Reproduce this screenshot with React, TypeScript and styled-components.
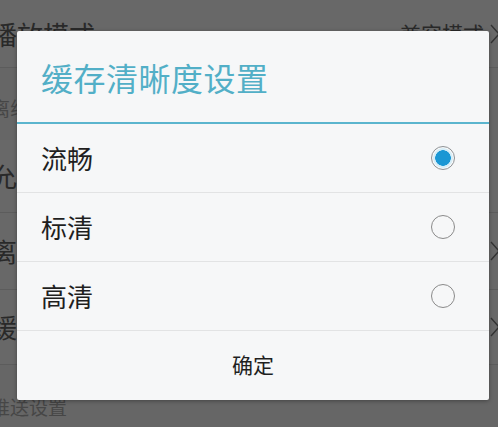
import React from "react";
import styled, { createGlobalStyle } from "styled-components";

const GlobalStyle = createGlobalStyle`
  html, body {
    margin: 0;
    padding: 0;
    background: #f2f2f2;
  }
  body {
    font-family: "Noto Sans CJK SC", "Noto Sans", sans-serif;
  }
  #root {
    width: 498px;
    height: 427px;
  }
`;

const Screen = styled.div`
  position: relative;
  width: 498px;
  height: 427px;
  overflow: hidden;
  background: #f2f2f2;
`;

const SettingsList = styled.div`
  display: flex;
  flex-direction: column;
  margin: 0 -2px 0 -9px;
`;

const SettingRow = styled.div<{ $h: number }>`
  display: flex;
  align-items: center;
  justify-content: space-between;
  height: ${(p) => p.$h}px;
  border-bottom: 1px solid #dcdcdc;
  background: #f8f8f8;
  box-sizing: content-box;
`;

const RowLabel = styled.span`
  font-size: 26px;
  line-height: 1;
  color: #636363;
`;

const RowValue = styled.span`
  display: flex;
  align-items: center;
  gap: 6px;
  font-size: 21px;
  line-height: 1;
  color: #636363;
`;

const SectionHeader = styled.div<{ $h: number; $pb: number }>`
  display: flex;
  align-items: flex-end;
  height: ${(p) => p.$h}px;
  padding-bottom: ${(p) => p.$pb}px;
  box-sizing: border-box;
  font-size: 19px;
  line-height: 1;
  color: #a8a8a8;
`;

const Backdrop = styled.div`
  position: absolute;
  inset: 0;
  background: rgba(0, 0, 0, 0.58);
`;

const Dialog = styled.div`
  position: absolute;
  left: 17px;
  top: 31px;
  width: 472px;
  height: 369px;
  background: #f6f7f8;
  border-radius: 2px;
  box-shadow: 0 1px 4px rgba(0, 0, 0, 0.35);
  display: flex;
  flex-direction: column;
  overflow: hidden;
`;

const DialogHeader = styled.div`
  height: 91px;
  display: flex;
  align-items: center;
  padding-left: 24px;
  border-bottom: 2px solid #5bb5ce;
  box-sizing: content-box;
`;

const DialogTitle = styled.h1`
  margin: 0;
  font-size: 32px;
  font-weight: 400;
  line-height: 1;
  color: #52afc7;
  letter-spacing: 0.5px;
`;

const OptionRow = styled.div`
  height: 68px;
  display: flex;
  align-items: center;
  justify-content: space-between;
  padding: 0 34px 0 24px;
  border-bottom: 1px solid #e2e3e4;
  box-sizing: content-box;
`;

const OptionLabel = styled.span`
  font-size: 26px;
  line-height: 1;
  color: #1f1f1f;
`;

const Radio = styled.span<{ $checked: boolean }>`
  width: 24px;
  height: 24px;
  box-sizing: border-box;
  border-radius: 50%;
  border: 1.5px solid ${(p) => (p.$checked ? "#8f9396" : "#8a8a8a")};
  background: ${(p) =>
    p.$checked
      ? "radial-gradient(circle, #1b97d4 0 7.5px, #d6eef8 8px 9.5px, #f6f7f8 10px)"
      : "#f6f7f8"};
`;

const DialogFooter = styled.div`
  flex: 1;
  display: flex;
  align-items: center;
  justify-content: center;
  font-size: 21px;
  line-height: 1;
  color: #1f1f1f;
  padding-bottom: 2px;
`;

const Chevron = () => (
  <svg width="10" height="20" viewBox="0 0 10 20">
    <polyline points="1,1 9,10 1,19" fill="none" stroke="#7a7a7a" strokeWidth="1.4" />
  </svg>
);

const options = [
  { label: "流畅", checked: true },
  { label: "标清", checked: false },
  { label: "高清", checked: false },
];

export default function App() {
  return (
    <>
      <GlobalStyle />
      <Screen>
        <SettingsList>
          <SettingRow $h={67}>
            <RowLabel>播放模式</RowLabel>
            <RowValue>
              兼容模式
              <Chevron />
            </RowValue>
          </SettingRow>
          <SectionHeader $h={72} $pb={23}>离线缓存</SectionHeader>
          <SettingRow $h={72}>
            <RowLabel>允许移动网络缓存</RowLabel>
          </SettingRow>
          <SettingRow $h={76}>
            <RowLabel>离线缓存路径</RowLabel>
            <Chevron />
          </SettingRow>
          <SettingRow $h={74}>
            <RowLabel>缓存清晰度</RowLabel>
            <Chevron />
          </SettingRow>
          <SectionHeader $h={72} $pb={21}>推送设置</SectionHeader>
        </SettingsList>
        <Backdrop />
        <Dialog>
          <DialogHeader>
            <DialogTitle>缓存清晰度设置</DialogTitle>
          </DialogHeader>
          {options.map((o) => (
            <OptionRow key={o.label}>
              <OptionLabel>{o.label}</OptionLabel>
              <Radio $checked={o.checked} />
            </OptionRow>
          ))}
          <DialogFooter>确定</DialogFooter>
        </Dialog>
      </Screen>
    </>
  );
}
